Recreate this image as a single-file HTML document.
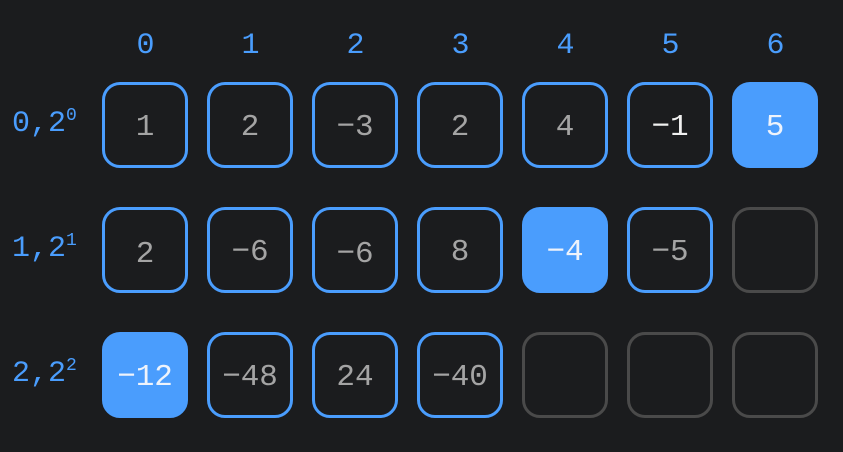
<!DOCTYPE html>
<html><head><style>
html,body{margin:0;padding:0;background:#1b1c1e;width:843px;height:452px;overflow:hidden;font-family:"Liberation Mono","DejaVu Sans Mono",monospace;}
.c{position:absolute;width:80px;height:80px;border:3.5px solid #4a9dfd;border-radius:18px;display:flex;align-items:center;justify-content:center;color:#a4a4a4;font-size:31px;box-sizing:content-box;}
.c span{margin-top:4px}
.f{background:#4a9dfd;color:#eef3fb;}
.e{border-color:#4a4a4a;}
.h{position:absolute;color:#4a9dfd;font-size:30px;width:87px;text-align:center;top:29px;}
.r{position:absolute;color:#4a9dfd;font-size:30px;left:12px;}
.r sup{font-size:18px;vertical-align:11px;}
</style></head><body>
<div class="h" style="left:102px">0</div>
<div class="h" style="left:207px">1</div>
<div class="h" style="left:312px">2</div>
<div class="h" style="left:417px">3</div>
<div class="h" style="left:522px">4</div>
<div class="h" style="left:627px">5</div>
<div class="h" style="left:732px">6</div>

<div class="r" style="top:106px">0,2<sup>0</sup></div>
<div class="r" style="top:231px">1,2<sup>1</sup></div>
<div class="r" style="top:356px">2,2<sup>2</sup></div>

<div class="c" style="left:102px;top:82px"><span>1</span></div>
<div class="c" style="left:207px;top:82px"><span>2</span></div>
<div class="c" style="left:312px;top:82px"><span>−3</span></div>
<div class="c" style="left:417px;top:82px"><span>2</span></div>
<div class="c" style="left:522px;top:82px"><span>4</span></div>
<div class="c" style="left:627px;top:82px;color:#f0f0f0"><span>−1</span></div>
<div class="c f" style="left:732px;top:82px"><span>5</span></div>

<div class="c" style="left:102px;top:207px"><span style="margin-top:8px">2</span></div>
<div class="c" style="left:207px;top:207px"><span>−6</span></div>
<div class="c" style="left:312px;top:207px"><span style="margin-top:8px">−6</span></div>
<div class="c" style="left:417px;top:207px"><span>8</span></div>
<div class="c f" style="left:522px;top:207px"><span>−4</span></div>
<div class="c" style="left:627px;top:207px"><span>−5</span></div>
<div class="c e" style="left:732px;top:207px"></div>

<div class="c f" style="left:102px;top:332px"><span>−12</span></div>
<div class="c" style="left:207px;top:332px"><span>−48</span></div>
<div class="c" style="left:312px;top:332px"><span>24</span></div>
<div class="c" style="left:417px;top:332px"><span>−40</span></div>
<div class="c e" style="left:522px;top:332px"></div>
<div class="c e" style="left:627px;top:332px"></div>
<div class="c e" style="left:732px;top:332px"></div>
</body></html>
